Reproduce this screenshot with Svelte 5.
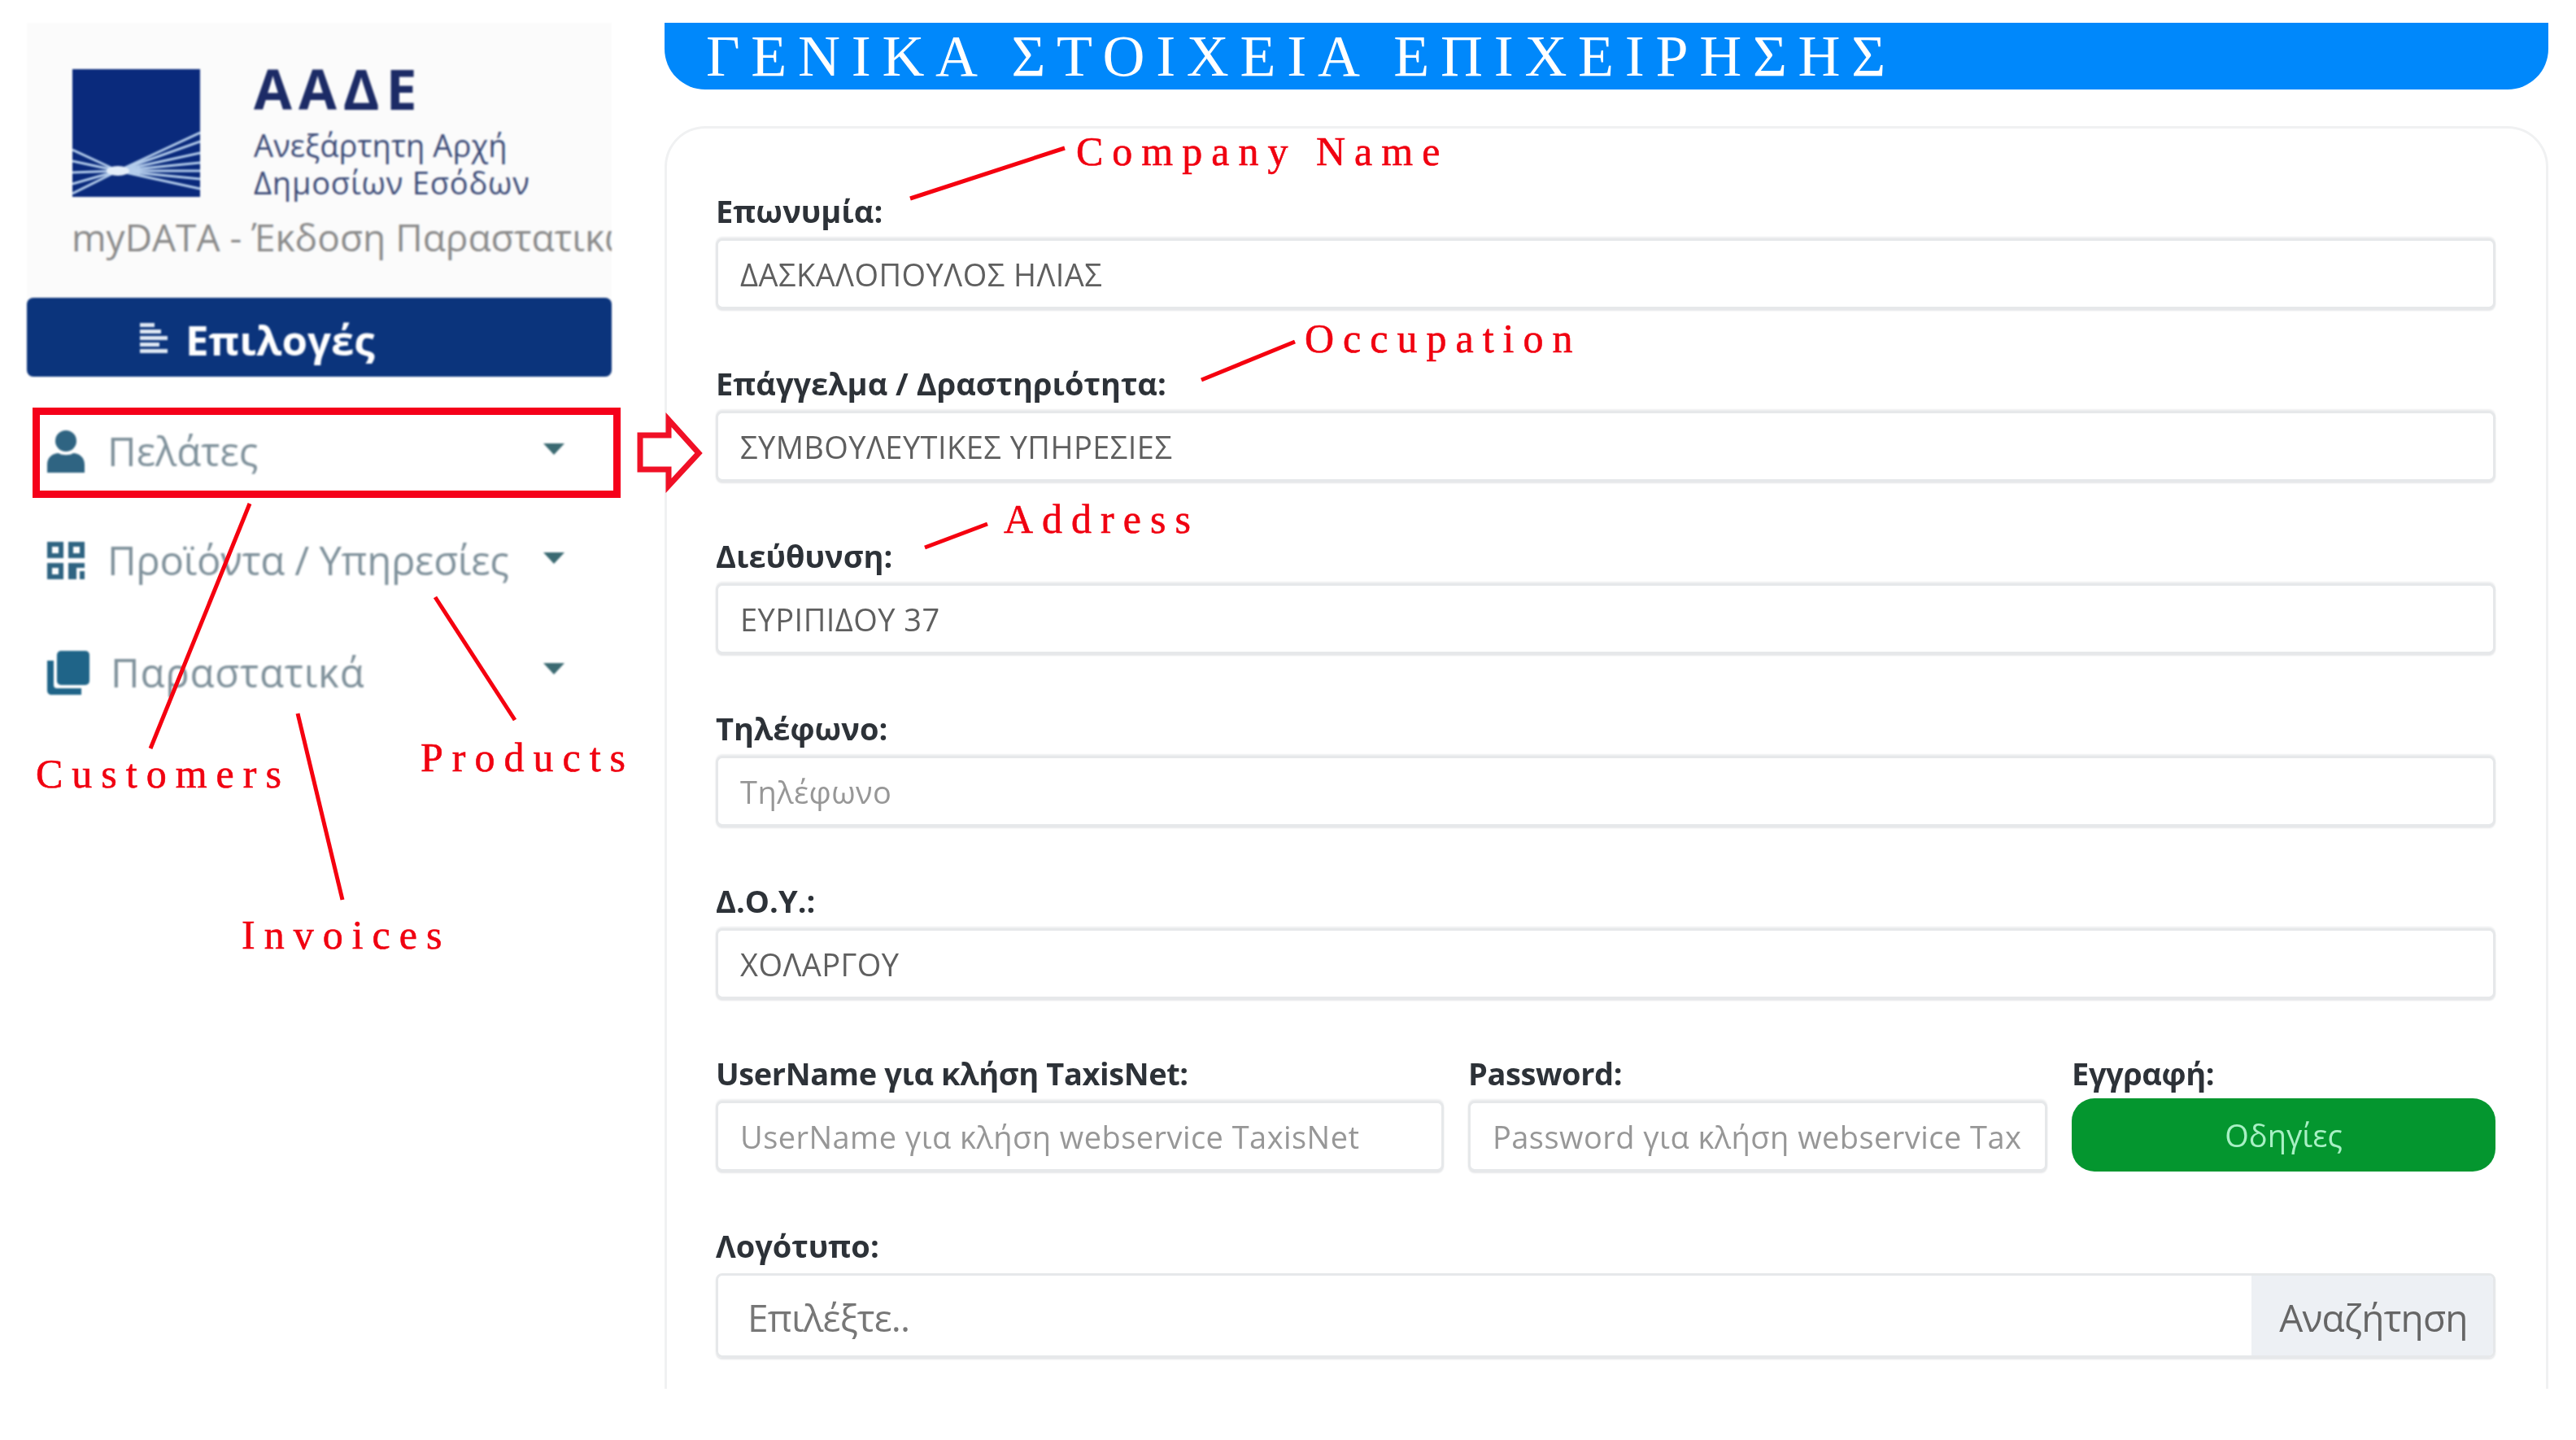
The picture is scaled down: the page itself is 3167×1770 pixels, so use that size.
<script>
  const menu = [
    { label: "Πελάτες", icon: "person" },
    { label: "Προϊόντα / Υπηρεσίες", icon: "grid" },
    { label: "Παραστατικά", icon: "copy" }
  ]

  const fields = [
    { label: "Επωνυμία:", value: "ΔΑΣΚΑΛΟΠΟΥΛΟΣ ΗΛΙΑΣ" },
    { label: "Επάγγελμα / Δραστηριότητα:", value: "ΣΥΜΒΟΥΛΕΥΤΙΚΕΣ ΥΠΗΡΕΣΙΕΣ" },
    { label: "Διεύθυνση:", value: "ΕΥΡΙΠΙΔΟΥ 37" },
    { label: "Τηλέφωνο:", placeholder: "Τηλέφωνο" },
    { label: "Δ.Ο.Υ.:", value: "ΧΟΛΑΡΓΟΥ" }
  ]

  // red notes drawn on top of the screenshot
  const notes = [
    { text: "Company Name", x: 1323, y: 156 },
    { text: "Occupation", x: 1604, y: 386 },
    { text: "Address", x: 1234, y: 608 },
    { text: "Customers", x: 44, y: 921 },
    { text: "Products", x: 517, y: 901 },
    { text: "Invoices", x: 297, y: 1119 }
  ]

  const leaders = [
    [1119, 244, 1309, 182],
    [1477, 467, 1592, 420],
    [1137, 673, 1214, 644],
    [307, 619, 185, 920],
    [535, 734, 633, 885],
    [366, 877, 421, 1106]
  ]

  const rays = [
    [246, 163], [246, 174], [246, 188], [246, 200], [246, 210], [246, 220], [246, 232],
    [89, 184], [89, 198], [89, 212], [89, 226], [89, 238]
  ]
</script>

<div class="page">
  <aside class="sidebar">
    <div class="brand">
      <div class="logo">
        <svg class="mark" viewBox="89 85 157 157" width="157" height="157">
          <rect x="89" y="85" width="157" height="157" fill="#0a2a7c" />
          {#each rays as [x, y]}
            <line x1="145" y1="210" x2={x} y2={y} stroke="#b4cdec" stroke-width="3" />
          {/each}
          <ellipse cx="145" cy="210" rx="14" ry="6" fill="#e4eefa" />
        </svg>
        <div class="org">
          <div class="org-name">ΑΑΔΕ</div>
          <div class="org-sub">Ανεξάρτητη Αρχή</div>
          <div class="org-sub">Δημοσίων Εσόδων</div>
        </div>
      </div>
      <div class="app-name">myDATA - Έκδοση Παραστατικών</div>
    </div>

    <div class="options">
      <svg width="34" height="38" viewBox="0 0 34 38" fill="#dfe8f4">
        <rect x="0" y="1" width="18" height="5" />
        <rect x="0" y="9" width="26" height="5" />
        <rect x="0" y="17" width="34" height="5" />
        <rect x="0" y="25" width="24" height="5" />
        <rect x="0" y="33" width="34" height="5" />
      </svg>
      <span>Επιλογές</span>
    </div>

    <ul class="menu">
      {#each menu as item}
        <li class={item.icon}>
          <span class="icon">
            {#if item.icon === "person"}
              <svg width="46" height="52" viewBox="0 0 46 52" fill="#2f6482">
                <circle cx="23" cy="13" r="13" />
                <path d="M0 52V42C0 33 7 28 14 28C18 31 28 31 32 28C39 28 46 33 46 42V52Z" />
              </svg>
            {:else if item.icon === "grid"}
              <svg width="46" height="46" viewBox="0 0 46 46" fill="#2f6482" fill-rule="evenodd">
                <path d="M0 0H20V20H0ZM6 6V14H14V6Z" />
                <path d="M26 0H46V20H26ZM32 6V14H40V6Z" />
                <path d="M0 26H20V46H0ZM6 32V40H14V32Z" />
                <path d="M26 26H46V32H36V46H26ZM40 36H46V46H40Z" />
              </svg>
            {:else}
              <svg width="52" height="54" viewBox="0 0 52 54" fill="#1f6488">
                <rect x="12" y="0" width="40" height="42" rx="5" />
                <path d="M8 12V42C8 45 10 46 12 46H42V54H6C2 54 0 52 0 48V12Z" />
              </svg>
            {/if}
          </span>
          <span class="text">{item.label}</span>
          <span class="caret"></span>
        </li>
      {/each}
    </ul>
  </aside>

  <main class="main">
    <h1 class="title">ΓΕΝΙΚΑ ΣΤΟΙΧΕΙΑ ΕΠΙΧΕΙΡΗΣΗΣ</h1>

    <form class="card">
      {#each fields as f}
        <div class="group">
          <label>
            <span>{f.label}</span>
            <input type="text" value={f.value ?? ""} placeholder={f.placeholder ?? ""} readonly />
          </label>
        </div>
      {/each}

      <div class="group row">
        <label>
          <span>UserName για κλήση TaxisNet:</span>
          <input type="text" placeholder="UserName για κλήση webservice TaxisNet" readonly />
        </label>
        <label>
          <span>Password:</span>
          <input type="text" placeholder="Password για κλήση webservice TaxisNet" readonly />
        </label>
        <div class="signup">
          <span>Εγγραφή:</span>
          <button type="button">Οδηγίες</button>
        </div>
      </div>

      <div class="group">
        <span class="file-label">Λογότυπο:</span>
        <div class="file">
          <span class="file-name">Επιλέξτε..</span>
          <span class="file-browse">Αναζήτηση</span>
        </div>
      </div>
    </form>
  </main>

  <div class="highlight"></div>

  <svg class="marks" width="3167" height="1770" viewBox="0 0 3167 1770">
    {#each leaders as [x1, y1, x2, y2]}
      <line {x1} {y1} {x2} {y2} stroke="#f5000f" stroke-width="5" />
    {/each}
    <path d="M787 535H822V516L859 557L822 597V577H787Z" fill="#fff" stroke="#f01026" stroke-width="7" />
  </svg>

  {#each notes as n}
    <div class="note" style="left: {n.x}px; top: {n.y}px">{n.text}</div>
  {/each}
</div>

<style>
  :global(body) {
    background: #fff;
  }

  .page {
    position: relative;
    width: 3167px;
    height: 1770px;
    overflow: hidden;
    display: flex;
    gap: 65px;
    padding: 28px 34px 0 33px;
    box-sizing: border-box;
    font-family: "Open Sans", "Noto Sans", sans-serif;
  }

  .sidebar {
    width: 719px;
    flex: none;
    filter: blur(0.9px);
  }

  .brand {
    height: 338px;
    box-sizing: border-box;
    padding: 57px 0 0 56px;
    background: #fbfbfb;
    overflow: hidden;
  }

  .logo {
    display: flex;
    gap: 66px;
  }

  .mark {
    flex: none;
  }

  .org-name {
    margin-top: -4px;
    font-size: 68px;
    font-weight: 700;
    line-height: 56px;
    letter-spacing: 8px;
    color: #1c2b66;
  }

  .org-sub {
    font-size: 38px;
    font-weight: 500;
    line-height: 46px;
    color: #3d4c78;
  }

  .org-sub:nth-child(2) {
    margin-top: 18px;
    letter-spacing: 0.1px;
  }

  .org-sub:nth-child(3) {
    letter-spacing: 0.8px;
  }

  .app-name {
    margin: 14px 0 0 -1px;
    font-size: 46px;
    line-height: 60px;
    color: #8b8b8b;
    white-space: nowrap;
  }

  .options {
    height: 97px;
    display: flex;
    align-items: center;
    gap: 22px;
    padding-left: 139px;
    box-sizing: border-box;
    border-radius: 8px;
    background: #0b347c;
    color: #fff;
    font-size: 51px;
    font-weight: 700;
  }

  .options span {
    margin-top: 5px;
  }

  .menu {
    list-style: none;
    margin: 0;
    padding: 0;
  }

  .menu li {
    display: flex;
    align-items: center;
    color: #7f919b;
    font-size: 49px;
    padding-left: 25px;
    height: 60px;
  }

  .menu li.person {
    margin-top: 62px;
  }

  .menu li.grid {
    margin-top: 74px;
  }

  .menu li.copy {
    margin-top: 78px;
  }

  .grid .text {
    letter-spacing: -0.3px;
  }

  .copy .text {
    margin-left: 4px;
    letter-spacing: 0.8px;
  }

  .text {
    margin-top: -3px;
    white-space: nowrap;
  }

  .icon {
    width: 74px;
    flex: none;
    display: flex;
  }

  .caret {
    position: absolute;
    left: 635px;
    width: 0;
    height: 0;
    margin-top: -6px;
    border-left: 13px solid transparent;
    border-right: 13px solid transparent;
    border-top: 14px solid #3b6a72;
  }

  .copy .caret {
    margin-top: -10px;
  }

  .main {
    flex: 1;
    min-width: 0;
  }

  .title {
    margin: 0;
    height: 82px;
    box-sizing: border-box;
    padding-left: 51px;
    border-radius: 0 0 50px 50px;
    background: #0088fb;
    color: #fff;
    font-family: "Liberation Serif", serif;
    font-size: 72px;
    font-weight: 400;
    line-height: 82px;
    letter-spacing: 13.7px;
    white-space: nowrap;
  }

  .card {
    margin-top: 45px;
    height: 1552px;
    box-sizing: border-box;
    padding: 81px 62px 0 60px;
    border: 3px solid #f0f1f2;
    border-bottom: none;
    border-radius: 50px 50px 0 0;
    filter: blur(0.6px);
  }

  .group {
    margin-bottom: 71px;
  }

  .group span,
  .file-label {
    display: block;
    height: 40px;
    margin-bottom: 14px;
    font-size: 38px;
    font-weight: 700;
    line-height: 40px;
    letter-spacing: 0;
    color: #2d3238;
    white-space: nowrap;
  }

  .row span {
    letter-spacing: -0.4px;
  }

  input {
    display: block;
    width: 100%;
    height: 87px;
    box-sizing: border-box;
    padding: 0 27px;
    border: 3px solid #e6e8ea;
    border-radius: 8px;
    background: #fff;
    box-shadow: 0 2px 2px #e6e7e9, 0 -2px 2px #eeeff0;
    font: 38px "Open Sans", sans-serif;
    letter-spacing: 0.45px;
    color: #5f5f5f;
    outline: none;
  }

  input::placeholder {
    color: #979797;
  }

  .row {
    display: grid;
    grid-template-columns: 895px 712px 1fr;
    gap: 30px;
  }

  .signup button {
    display: block;
    width: 100%;
    height: 90px;
    margin-top: -3px;
    border: none;
    border-radius: 28px;
    background: #04962f;
    color: #a8f0c4;
    font: 38px "Open Sans", sans-serif;
  }

  .file {
    display: flex;
    height: 104px;
    box-sizing: border-box;
    border: 3px solid #e6e8ea;
    border-radius: 8px;
    overflow: hidden;
    box-shadow: 0 2px 2px #e6e7e9;
    font-size: 46px;
  }

  .group .file span {
    height: auto;
    margin: 0;
    font-size: 46px;
    font-weight: 400;
    line-height: 102px;
    letter-spacing: -0.8px;
  }

  .group .file .file-name {
    flex: 1;
    padding-left: 36px;
    color: #777;
  }

  .group .file .file-browse {
    width: 297px;
    padding-left: 3px;
    box-sizing: border-box;
    text-align: center;
    background: #edf0f4;
    color: #666;
  }

  .highlight {
    position: absolute;
    left: 40px;
    top: 501px;
    width: 723px;
    height: 111px;
    box-sizing: border-box;
    border: 9px solid #f5001a;
  }

  .marks {
    position: absolute;
    left: 0;
    top: 0;
    pointer-events: none;
  }

  .note {
    position: absolute;
    font-family: "Liberation Serif", serif;
    font-size: 50px;
    line-height: 60px;
    letter-spacing: 11px;
    color: #f00010;
    -webkit-text-stroke: 0.6px #f00010;
    white-space: nowrap;
  }
</style>
